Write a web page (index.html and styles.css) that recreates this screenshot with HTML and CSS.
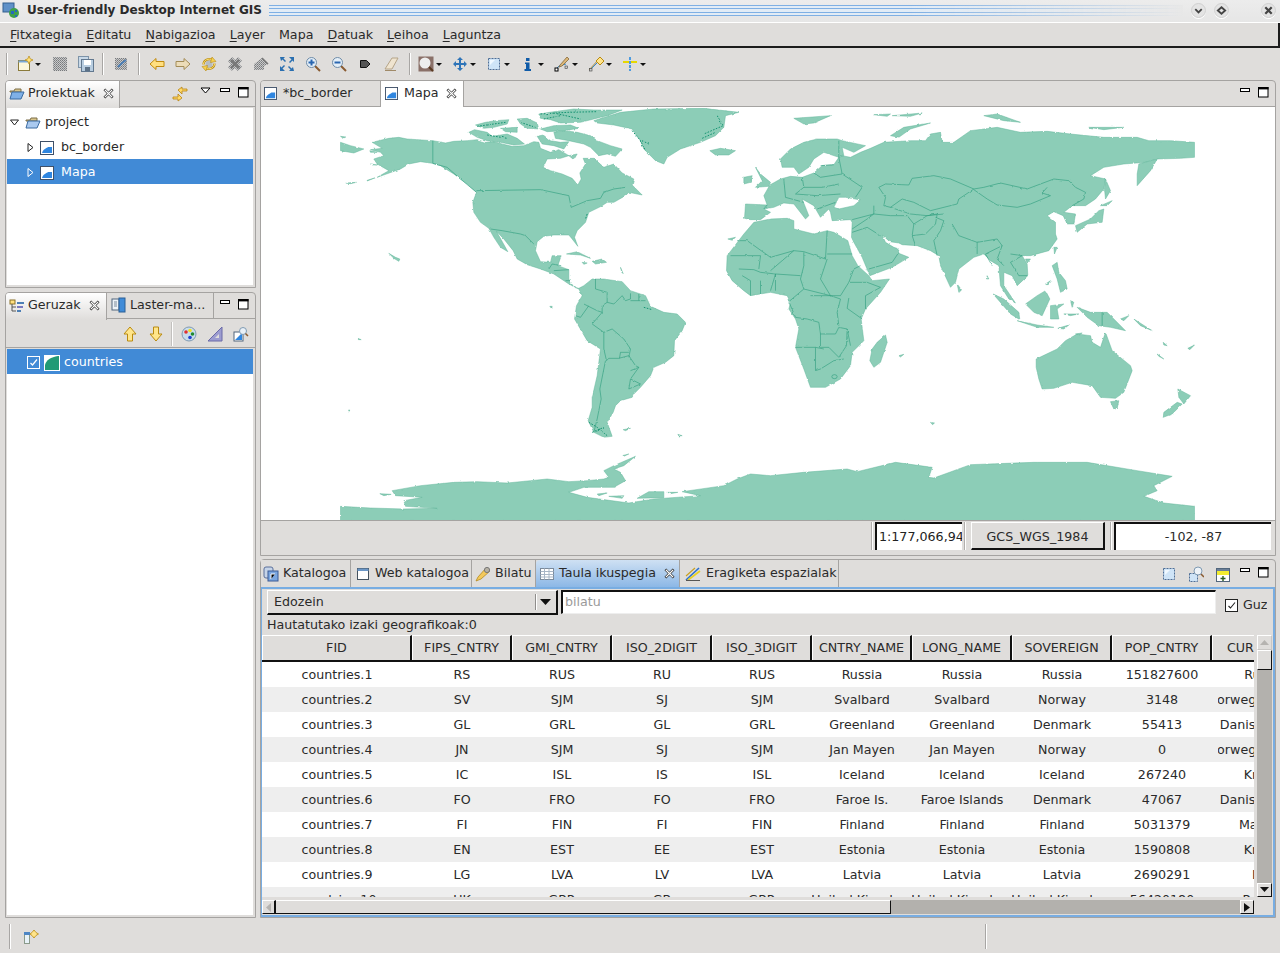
FILE: index.html
```html
<!DOCTYPE html>
<html lang="eu">
<head>
<meta charset="utf-8">
<title>User-friendly Desktop Internet GIS</title>
<link rel="stylesheet" href="styles.css">
</head>
<body>
<svg class="defs" aria-hidden="true">
  <defs>
    <pattern id="dith" width="2" height="2" patternUnits="userSpaceOnUse">
      <rect width="2" height="2" fill="#c9c9c9"/><rect width="1" height="1" fill="#77797c"/><rect x="1" y="1" width="1" height="1" fill="#8b8d90"/>
    </pattern>
    <filter id="rough" x="0" y="0" width="100%" height="100%">
      <feTurbulence type="fractalNoise" baseFrequency=".22" numOctaves="2" seed="4"/>
      <feDisplacementMap in="SourceGraphic" scale="2.200" xChannelSelector="R" yChannelSelector="G"/>
    </filter>
    <symbol id="i-map" viewBox="0 0 14 14"><rect x=".5" y=".5" width="13" height="13" fill="#fff" stroke="#3f5068"/><path d="M2 12 C3 8 7 7 8 6 H12 V12Z" fill="#2f86e0"/></symbol>
    <symbol id="i-close" viewBox="0 0 12 12"><path d="M2.500 2.500L9.500 9.500M9.500 2.500L2.500 9.500" stroke="#333" stroke-width="2.800" stroke-linecap="square"/><path d="M2.500 2.500L9.500 9.500M9.500 2.500L2.500 9.500" stroke="#fff" stroke-width="1.300" stroke-linecap="square"/></symbol>
    <symbol id="i-min" viewBox="0 0 11 5"><rect x=".5" y=".5" width="9" height="3" fill="#fff" stroke="#000"/></symbol>
    <symbol id="i-max" viewBox="0 0 11 11"><rect x=".5" y=".5" width="9.5" height="9.5" fill="#fff" stroke="#000"/><rect x="0" y="0" width="10.5" height="2.4" fill="#000"/></symbol>
    <symbol id="i-sel" viewBox="0 0 16 16"><rect x="2.500" y="2.500" width="11" height="11" fill="#cfe4f7" stroke="#4e6f96" stroke-dasharray="2 1"/><path d="M4 4H9L4 9Z" fill="#f0f8ff"/></symbol>
    <symbol id="i-mag" viewBox="0 0 16 16"><path d="M10 10L15 15" stroke="#8a5a30" stroke-width="2"/><circle cx="6.500" cy="6.500" r="5" fill="#e4eef7" stroke="#6f8ca8"/></symbol>
  </defs>
</svg>

<header class="titlebar">
  <svg class="ic app" viewBox="0 0 18 18"><rect x="1" y="2" width="11" height="9" fill="#5f91c8" stroke="#34618f"/><circle cx="12" cy="12" r="5" fill="#3fa04c"/><path d="M9 10h3v3H9zM13 9h2v2h-2zM13 14h2v2h-2z" fill="#2568c0"/></svg>
  <span class="wintitle">User-friendly Desktop Internet GIS</span>
  <span class="stripes"></span>
  <span class="wbtn"><svg viewBox="0 0 12 12"><path d="M2.500 4.500L6 8L9.500 4.500" fill="none" stroke="#444" stroke-width="2"/></svg></span>
  <span class="wbtn wbtn2"><svg viewBox="0 0 12 12"><path d="M6 2.500L10 6L6 9.500L2 6Z" fill="none" stroke="#444" stroke-width="2"/></svg></span>
  <span class="wbtn wbtn3"><svg viewBox="0 0 12 12"><path d="M2.500 2.500L9.500 9.500M9.500 2.500L2.500 9.500" stroke="#444" stroke-width="2.400"/></svg></span>
</header>

<nav class="menubar">
  <span><u>F</u>itxategia</span><span><u>E</u>ditatu</span><span><u>N</u>abigazioa</span><span><u>L</u>ayer</span><span>Mapa</span><span><u>D</u>atuak</span><span><u>L</u>eihoa</span><span><u>L</u>aguntza</span>
</nav>

<div class="toolbar">
  <i class="sep first"></i>
  <span class="dd dd-first"><svg class="ic" viewBox="0 0 16 16"><rect x="1.500" y="4.500" width="11" height="10" fill="#fdf8dc" stroke="#8a7a3a"/><rect x="1.500" y="4.500" width="11" height="2" fill="#7ba9d8"/><path d="M12 0L13.200 2.800L16 4L13.200 5.200L12 8L10.800 5.200L8 4L10.800 2.800Z" fill="#ffe27a" stroke="#b98a10" stroke-width=".7"/></svg><b class="arrow"></b></span>
  <span class="tb"><svg class="ic" viewBox="0 0 16 16"><rect x="1" y="1" width="14" height="14" fill="url(#dith)"/></svg></span>
  <span class="tb"><svg class="ic" viewBox="0 0 16 16"><rect x=".5" y=".5" width="10" height="11" fill="#c9d9e8" stroke="#7d93a8"/><rect x="3.500" y="3.500" width="12" height="12" fill="#b8cde0" stroke="#62788f"/><rect x="6" y="4" width="7" height="5" fill="#fff"/><rect x="7" y="11" width="5" height="4" fill="#5d7288"/></svg></span>
  <i class="sep s2"></i>
  <span class="tb"><svg class="ic" viewBox="0 0 16 16"><rect x="2" y="2" width="12" height="12" fill="url(#dith)"/><path d="M5 11L9 7L13 4" stroke="#4d7fb5" stroke-width="2" fill="none"/></svg></span>
  <i class="sep s3"></i>
  <span class="tb"><svg class="ic" viewBox="0 0 16 16"><path d="M1 8L7 2.500V5.500H15V10.500H7V13.500Z" fill="#ffdf80" stroke="#c08a10"/></svg></span>
  <span class="tb"><svg class="ic" viewBox="0 0 16 16"><path d="M15 8L9 2.500V5.500H1V10.500H9V13.500Z" fill="#ecdcb8" stroke="#a38c58"/></svg></span>
  <span class="tb"><svg class="ic" viewBox="0 0 16 16"><circle cx="8" cy="8" r="3.500" fill="#b7bdc2"/><path d="M2.500 8.500C2.500 4 7.500 1.800 11.800 4M13.500 7.500C13.500 12 8.500 14.200 4.200 12" fill="none" stroke="#b98a10" stroke-width="2.200"/><path d="M2.500 8.500C2.500 4 7.500 1.800 11.800 4M13.500 7.500C13.500 12 8.500 14.200 4.200 12" fill="none" stroke="#ffe67a" stroke-width="1"/><path d="M11 1L15 5.500L9.500 6.500ZM5 15L1 10.500L6.500 9.500Z" fill="#f5d050" stroke="#b98a10" stroke-width=".6"/></svg></span>
  <span class="tb"><svg class="ic" viewBox="0 0 16 16"><path d="M3 3L13 13M13 3L3 13" stroke="url(#dith)" stroke-width="6"/><path d="M4 4L12 12M12 4L4 12" stroke="#777" stroke-width="2.400"/></svg></span>
  <span class="tb"><svg class="ic" viewBox="0 0 16 16"><path d="M1 14V8L9 2L15 8L11 10V14Z" fill="url(#dith)"/><path d="M9 2L15 8" stroke="#777" stroke-width="1.500"/></svg></span>
  <span class="tb"><svg class="ic" viewBox="0 0 16 16"><path d="M1 1H6L4.500 2.500L7 5L6 6L3.500 3.500L2 5ZM15 1V6L13.500 4.500L11 7L10 6L12.500 3.500L10 1ZM1 15V10L2.500 11.500L5 9L6 10L3.500 12.500L6 15ZM15 15H10L11.500 13.500L9 11L10 10L12.500 12.500L14 11Z" fill="#2a6fb0"/></svg></span>
  <span class="tb"><svg class="ic" viewBox="0 0 16 16"><use href="#i-mag"/><path d="M3.500 6.500H9.500M6.500 3.500V9.500" stroke="#2a66b0" stroke-width="2"/></svg></span>
  <span class="tb"><svg class="ic" viewBox="0 0 16 16"><use href="#i-mag"/><path d="M3.500 6.500H9.500" stroke="#2a66b0" stroke-width="2"/></svg></span>
  <span class="tb"><svg class="ic" viewBox="0 0 16 16"><path d="M3.500 4.500H9.500L13 8L9.500 11.500H3.500Z" fill="#555" stroke="#111"/></svg></span>
  <span class="tb"><svg class="ic" viewBox="0 0 16 16"><path d="M2 13L9 2H15L9 13Z" fill="#efe4d0" stroke="#b5a488"/><path d="M2 14.500H13" stroke="#a08a68"/></svg></span>
  <i class="sep s4"></i>
  <span class="dd"><svg class="ic" viewBox="0 0 16 16"><rect x=".5" y=".5" width="15" height="15" fill="#8a7068"/><circle cx="7" cy="7" r="5.500" fill="#eee"/><path d="M11 11L15 15" stroke="#5a3a20" stroke-width="2"/></svg><b class="arrow"></b></span>
  <span class="dd"><svg class="ic" viewBox="0 0 16 16"><path d="M8 1L11 4H9V7H12V5L15 8L12 11V9H9V12H11L8 15L5 12H7V9H4V11L1 8L4 5V7H7V4H5Z" fill="#2e74b8"/></svg><b class="arrow"></b></span>
  <span class="dd"><svg class="ic" viewBox="0 0 16 16"><use href="#i-sel"/></svg><b class="arrow"></b></span>
  <span class="dd"><svg class="ic" viewBox="0 0 16 16"><path d="M6 2H9.500V5H6ZM5 6.500H9.500V13H11V15H4.500V13H6V8H5Z" fill="#0f5ba8"/></svg><b class="arrow"></b></span>
  <span class="dd"><svg class="ic" viewBox="0 0 16 16"><path d="M2 13L5 10L12 8" stroke="#3a8ac8" fill="none"/><rect x="1" y="12" width="3" height="3" fill="#fff" stroke="#000"/><rect x="11" y="10" width="2.500" height="2.500" fill="#ccc" stroke="#444" stroke-width=".6"/><path d="M6 9L13 1L15 3L8 10L5 11Z" fill="#dcb878" stroke="#7a5a2c" stroke-width=".7"/></svg><b class="arrow"></b></span>
  <span class="dd"><svg class="ic" viewBox="0 0 16 16"><path d="M1 14L12 2" stroke="#a88a3a"/><path d="M3 13L9 7" stroke="#3a8ac8"/><rect x="1.500" y="12.500" width="2.500" height="2.500" fill="#ccc" stroke="#444" stroke-width=".6"/><path d="M12 1L16 5L12 9L8 5Z" fill="#ffe48a" stroke="#b98a10"/></svg><b class="arrow"></b></span>
  <span class="dd"><svg class="ic" viewBox="0 0 16 16"><path d="M1 6H15" stroke="#e6d800" stroke-width="2"/><path d="M8 1V15" stroke="#4d9be0" stroke-width="2" stroke-dasharray="3 1"/></svg><b class="arrow"></b></span>
</div>

<main class="workbench">
  <section class="leftcol">
    <div class="panel proj">
      <div class="tabstrip">
        <div class="tab on"><svg class="ic" viewBox="0 0 16 16"><path d="M1 5H5L6 3H12V6H1Z" fill="#d9c58a" stroke="#7d6f48"/><path d="M3 6H15L12 13H1Z" fill="#7fb0e6" stroke="#3a6aa0"/></svg>Proiektuak<svg class="x" viewBox="0 0 12 12"><use href="#i-close"/></svg></div>
        <span class="fill"></span>
        <svg class="ic link" viewBox="0 0 16 16"><path d="M1 11H6V8L10 12L6 15V13H1ZM15 5H10V8L6 4L10 1V3H15Z" fill="#ffd968" stroke="#b98410" stroke-width=".8"/></svg>
        <svg class="vmenu" viewBox="0 0 11 7"><path d="M1 1H10L5.500 6Z" fill="#fff" stroke="#000"/></svg>
        <svg class="min" viewBox="0 0 11 5"><use href="#i-min"/></svg>
        <svg class="max" viewBox="0 0 11 11"><use href="#i-max"/></svg>
      </div>
      <div class="tree">
        <div class="node"><svg class="tw" viewBox="0 0 9 9"><path d="M.5 2H8.500L4.500 7Z" fill="#fff" stroke="#222"/></svg><svg class="ic" viewBox="0 0 16 16"><path d="M1 5H5L6 3H12V6H1Z" fill="#d9c58a" stroke="#7d6f48"/><path d="M3 6H15L12 13H1Z" fill="#a9c9ef" stroke="#3a6aa0"/></svg><span>project</span></div>
        <div class="node l2"><svg class="tw" viewBox="0 0 9 9"><path d="M2 .5L7 4.500L2 8.500Z" fill="#fff" stroke="#222"/></svg><svg class="ic" viewBox="0 0 14 14"><use href="#i-map"/></svg><span>bc_border</span></div>
        <div class="node l2 sel"><svg class="tw" viewBox="0 0 9 9"><path d="M2 .5L7 4.500L2 8.500Z" fill="#3f87d3" stroke="#fff"/></svg><svg class="ic" viewBox="0 0 14 14"><use href="#i-map"/></svg><span>Mapa</span></div>
      </div>
    </div>
    <div class="panel layers">
      <div class="tabstrip">
        <div class="tab on geru"><svg class="ic" viewBox="0 0 16 16"><rect x="1" y="2" width="5" height="4" fill="#ffe080" stroke="#8a7028"/><path d="M3 6V13H7M3 9H7" stroke="#555" fill="none"/><rect x="8" y="4" width="7" height="2" fill="#4d7fb5"/><rect x="8" y="8" width="6" height="2" fill="#7a7ac0"/><rect x="8" y="12" width="4" height="2" fill="#4d7fb5"/></svg>Geruzak<svg class="x" viewBox="0 0 12 12"><use href="#i-close"/></svg></div>
        <div class="tab off laster"><svg class="ic" viewBox="0 0 16 16"><rect x="1" y="2" width="7" height="11" fill="#eef3f8" stroke="#52667c"/><rect x="8" y="1" width="6" height="14" fill="#3f8bd8" stroke="#2a5f95"/><path d="M3 5H6M3 7H6M3 9H6" stroke="#7a8a9a"/></svg>Laster-ma...</div>
        <span class="fill"></span>
        <svg class="min" viewBox="0 0 11 5"><use href="#i-min"/></svg>
        <svg class="max" viewBox="0 0 11 11"><use href="#i-max"/></svg>
      </div>
      <div class="layerbar">
        <svg class="ic" viewBox="0 0 16 16"><path d="M8 1L14 8H10.500V15H5.500V8H2Z" fill="#ffe58a" stroke="#b98a10"/></svg>
        <svg class="ic g2" viewBox="0 0 16 16"><path d="M8 15L14 8H10.500V1H5.500V8H2Z" fill="#ffe58a" stroke="#b98a10"/></svg>
        <i class="vbar"></i>
        <svg class="ic" viewBox="0 0 16 16"><circle cx="8" cy="8" r="7" fill="#c8dcec" stroke="#7f9ab2"/><circle cx="5" cy="6" r="1.800" fill="#e03030"/><circle cx="9" cy="4.500" r="1.800" fill="#f2e020"/><circle cx="11.500" cy="8" r="1.800" fill="#208a30"/><circle cx="9" cy="11.500" r="1.800" fill="#2040d0"/></svg>
        <svg class="ic g3" viewBox="0 0 16 16"><path d="M1 15L15 1V15Z" fill="#9c9cd0" stroke="#6a6aa8"/><path d="M8 12L12 8V12Z" fill="#dfdddb"/></svg>
        <svg class="ic g3" viewBox="0 0 16 16"><rect x="1" y="6" width="9" height="9" fill="#fff" stroke="#52667c"/><path d="M2 14L9 7V14Z" fill="#2f86e0"/><circle cx="10" cy="5" r="3.500" fill="#e9f0f7" stroke="#7f9ab2"/><path d="M12.500 7.500L15 10" stroke="#8a5a30" stroke-width="1.500"/></svg>
      </div>
      <div class="tree layertree">
        <div class="node laynode sel"><span class="chk"><svg viewBox="0 0 11 11"><path d="M2.500 6L4.500 8L9 2.500" fill="none" stroke="#fff" stroke-width="1.200"/></svg></span><svg class="swatch" viewBox="0 0 16 16"><rect width="16" height="16" fill="#fff"/><path d="M1 15V10C2 5 7 2 14 1H15V15Z" fill="#219a75"/></svg><span>countries</span></div>
      </div>
    </div>
  </section>

  <section class="rightcol">
    <div class="panel editor">
      <div class="tabstrip">
        <div class="tab off bc"><svg class="ic ed" viewBox="0 0 14 14"><use href="#i-map"/></svg>*bc_border</div>
        <div class="tab white mapa"><svg class="ic ed" viewBox="0 0 14 14"><use href="#i-map"/></svg>Mapa<svg class="x" viewBox="0 0 12 12"><use href="#i-close"/></svg></div>
        <span class="fill"></span>
        <svg class="min" viewBox="0 0 11 5"><use href="#i-min"/></svg>
        <svg class="max" viewBox="0 0 11 11"><use href="#i-max"/></svg>
      </div>
      <svg class="map" viewBox="261 108 1013 413" width="1013" height="413" role="img" aria-label="Munduko mapa">
        <g filter="url(#rough)">
        <g class="land">
          <g transform="translate(320 100) scale(.33333)">
            <path d="M155 130L175 125 205 118 235 115 260 120 337 125 375 132 400 127 440 125 470 122 495 130 520 128 545 135 575 142 610 140 640 128 655 130 660 148 690 160 715 152 745 170 720 178 680 180 668 205 690 215 725 225 755 238 772 258 782 240 778 222 795 195 788 178 820 178 850 205 880 195 905 222 940 240 935 258 965 288 925 280 915 290 880 310 860 310 842 322 805 340 795 370 770 395 762 415 772 442 755 420 745 408 700 408 670 412 650 428 645 455 660 488 690 490 695 470 722 470 712 500 745 512 745 540 760 565 775 568 790 560 815 540 850 540 905 548 930 575 975 590 990 622 1030 640 1070 645 1095 670 1085 695 1062 725 1060 770 1035 790 1000 805 990 830 960 865 940 885 935 895 900 905 885 920 878 940 860 970 875 1012 850 1015 820 1000 803 965 815 925 815 895 830 830 840 750 800 725 762 660 768 620 785 590 775 570 745 555 700 525 660 510 620 497 590 480 578 455 550 420 528 397 562 458 540 445 520 415 505 388 480 370 460 340 457 310 468 280 440 255 400 225 360 200 335 193 300 188 265 195 240 210 170 235 205 215 170 195 160 180 190 170 180 160 150 152 185 148Z"/>
            <path d="M445 100L462 92 500 100 515 112 560 105 590 118 612 135 580 138 540 130 500 125 470 115Z"/>
            <path d="M700 100L730 95 770 100 810 110 830 125 870 140 905 150 885 172 860 165 835 170 810 145 790 135 745 125 705 118Z"/>
            <path d="M650 112L668 108 690 125 720 130 745 128 730 150 700 140 665 135Z"/>
            <path d="M745 170L770 165 760 182Z"/>
            <path d="M655 45L700 38 760 30 820 33 905 33 860 50 820 60 780 70 720 72 690 62 660 58Z"/>
            <path d="M465 78L495 70 525 65 565 62 560 75 520 85 490 88Z"/>
            <path d="M590 60L620 58 650 72 655 90 620 88 600 75Z"/>
            <path d="M660 90L700 80 750 78 775 88 730 95 680 98Z"/>
            <path d="M540 88L590 85 590 100 555 98Z"/>
            <path d="M820 65L900 40 1000 30 1150 28 1255 40 1215 50 1210 85 1185 110 1140 130 1080 150 1040 175 1030 195 1005 185 970 150 960 125 935 90 880 78 830 72Z"/>
            <path d="M1168 155L1200 148 1245 155 1225 168 1185 168Z"/>
            <path d="M60 130L90 140 130 150 100 162 60 155Z"/>
            <path d="M738 465L770 458 810 478 780 468Z"/>
            <path d="M815 487L845 480 858 490 825 495Z"/>
            <path d="M785 490L800 492 790 496Z"/>
            <path d="M60 112L76 114 68 118Z"/>
            <path d="M205 463L225 475 238 480 235 487 220 478Z"/>
            <path d="M1270 235L1295 230 1290 250 1270 255Z"/>
            <path d="M1305 205L1320 225 1350 250 1345 262 1305 265 1325 245Z"/>
            <path d="M140 244L165 236 140 246ZM76 252L108 250 90 254Z"/>
            <path d="M688 622L695 622 694 630Z"/>
            <path d="M900 505L908 524 904 520Z"/>
            <path d="M1222 420L1245 415 1235 424Z"/>
            <path d="M112 718L122 722 114 722Z"/>
            <path d="M148 155L170 160 150 160ZM150 195L170 198 155 198Z"/>
          </g>
          <g transform="translate(770 100) scale(.33333)">
            <path d="M-75 315L-10 318 -20 290 -2 258 30 240 60 232 95 235 130 222 155 200 190 197 205 175 215 170 240 175 270 160 300 148 340 130 420 125 465 125 480 105 510 100 515 130 550 130 600 95 680 85 750 100 830 97 900 105 1000 115 1100 115 1135 125 1200 125 1272 130 1272 175 1230 178 1160 180 1125 190 1060 195 1000 205 960 230 1005 240 1000 270 975 300 945 320 905 320 880 340 915 345 910 375 890 375 878 350 850 338 830 350 855 370 855 405 860 420 835 455 780 470 755 470 770 495 772 530 740 560 725 530 700 520 700 560 735 612 715 600 690 560 685 500 660 485 640 465 610 475 565 510 555 550 540 565 510 500 505 470 480 455 440 440 395 437 385 432 358 428 335 408 345 430 370 445 385 450 383 462 415 475 365 505 298 530 275 475 250 430 243 415 245 370 240 362 185 365 180 340 175 330 150 355 130 320 95 300 115 350 105 360 70 315 40 312 10 325 -20 330 0 340 -30 362 -60 362 -78 358Z"/>
            <path d="M30 180L60 150 100 130 140 120 200 120 215 125 285 140 250 160 215 145 220 170 205 175 160 160 130 180 115 205 85 225 70 205 35 205Z"/>
            <path class="sea" d="M190 325L205 295 225 295 270 303 250 320 205 330Z"/>
            <path d="M-50 370L-80 405 -130 470 -132 515 -115 545 -80 575 -60 590 0 580 50 590 60 610 55 630 75 660 85 690 75 745 100 810 120 865 165 865 210 840 240 800 245 760 280 725 272 660 285 630 330 580 357 540 305 545 295 530 262 500 245 470 232 425 190 400 170 395 130 405 70 390 70 365 50 358 0 360Z"/>
            <path d="M345 708L350 730 330 790 310 805 298 785 305 750 320 730Z"/>
            <path d="M560 555L575 575 565 580Z"/>
            <path d="M360 110L400 85 480 72 420 90 385 115Z"/>
            <path d="M70 58L180 50 130 72 100 75Z"/>
            <path d="M310 47L360 45 350 52ZM365 50L455 42 420 52ZM640 50L680 45 750 70 700 65Z"/>
            <path d="M955 85L1060 85 1000 92Z"/>
            <path d="M1100 225L1105 195 1160 180 1140 215 1100 260Z"/>
            <path d="M1005 240L1020 275 1005 300 1002 270Z"/>
            <path d="M915 380L960 360 985 335 1000 330 995 370 950 375 920 400Z"/>
            <path d="M990 320L1025 305 1010 320Z"/>
            <path d="M850 445L860 445 852 465Z"/>
            <path d="M765 480L780 480 770 492Z"/>
            <path d="M845 500L860 490 865 520 885 545 890 570 870 580 860 540Z"/>
            <path d="M765 615L800 590 825 575 838 600 815 650 790 640Z"/>
            <path d="M668 585L700 600 745 640 748 662 720 645Z"/>
            <path d="M740 665L800 678 850 685 800 685Z"/>
            <path d="M862 688L895 678 880 690Z"/>
            <path d="M840 620L880 615 860 630 865 660 840 660Z"/>
            <path d="M900 605L910 610 905 625ZM880 645L925 645 900 650Z"/>
            <path d="M920 625L960 640 1010 640 1040 670 1065 695 1020 685 985 680 950 655Z"/>
            <path d="M1050 660L1075 650 1060 665ZM1090 660L1145 695 1110 680Z"/>
            <path d="M797 780L860 750 885 725 920 705 960 710 965 730 990 745 1005 700 1025 755 1080 800 1085 815 1060 880 1035 898 990 895 965 860 905 850 850 868 815 870 805 840 797 805Z"/>
            <path d="M1020 908L1045 905 1040 928 1030 930Z"/>
            <path d="M1222 870L1260 890 1240 915 1225 895Z"/>
            <path d="M1220 910L1235 915 1205 945 1178 955 1180 940Z"/>
            <path d="M1160 765L1180 780 1165 772ZM1252 748L1272 738 1258 752Z"/>
            <path d="M1178 730L1190 740 1180 738ZM650 530L655 540 648 540ZM825 555L840 545 830 558ZM915 705L935 702 925 708Z"/>
          </g>
          <g transform="translate(320 300) scale(.33333)">
            <path d="M60 622L150 627 250 630 350 628 255 622 250 605 305 595 225 590 215 575 300 560 400 550 470 548 560 552 630 545 680 540 745 548 800 545 850 540 865 535 850 515 880 500 945 472 910 500 880 510 900 520 915 545 880 565 790 565 745 580 800 595 925 612 1000 600 1140 590 1085 578 1210 560 1250 540 1290 525 1350 530 1450 520 1580 510 1610 518 1725 490 1835 505 1825 535 1840 537 1950 497 2140 490 2300 490 2450 515 2555 532 2500 560 2510 575 2470 592 2530 612 2622 622 2622 665 60 665Z"/>
            <path d="M950 598L985 578 1030 578 1030 596Z"/>
            <path d="M865 592L910 590 905 598ZM830 585L860 582 835 590ZM1042 580L1072 580 1050 584Z"/>
            <path d="M178 584L212 586 190 590Z"/>
            <path d="M908 392L930 388 915 395ZM1072 406L1085 410 1075 411Z"/>
            <path d="M84 333L88 333 86 337Z"/>
            <path d="M905 470L925 465 910 472Z"/>
          </g>
          <g transform="translate(770 300) scale(.33333)">
            <path d="M480 370L492 372 486 377Z"/>
            <path d="M385 170L400 166 390 174Z"/>
          </g>
        </g>
        <g class="borders">
          <g transform="translate(320 100) scale(.33333)">
            <path d="M337 125V193L380 205 420 240 468 280"/>
            <path d="M468 275L660 272 745 290 752 325 800 305 840 298 850 280 880 270 915 265"/>
            <path d="M510 390L545 395 600 405 615 410 640 435M685 510L695 495 722 500M700 515L745 512M735 545L750 545"/>
            <path d="M825 540V570L860 580V610L880 615 905 590 915 605 930 600V583M930 605H975M955 585V605"/>
            <path d="M790 615L830 635 845 640V620L860 610M765 650L780 655 805 620"/>
            <path d="M845 640L815 675 850 700V750M850 700L875 690 910 720 930 750 925 775"/>
            <path d="M850 750L858 785 865 778H895L925 770 945 800 955 805 930 815M855 785L838 870 842 900 830 960 820 1000"/>
            <path d="M897 778L900 760H925M955 805L930 840 925 870 960 855 930 840"/>
          </g>
          <g class="detail" transform="translate(320 100) scale(.33333)">
            <path d="M660 45L740 40 830 38M670 60L720 50M700 42L780 60M935 95L960 125 975 155M965 125L985 135M1190 50L1208 80 1150 105M1145 118L1185 100M470 82L555 70M600 70L645 85M500 108L560 118M805 970L830 985 860 1010M815 1000L850 985M970 625L995 632M800 345L795 360"/>
          </g>
          <g transform="translate(770 100) scale(.33333)">
            <path d="M-100 425H-70L0 475 70 455 100 458 165 480 170 395M170 465H245M170 480L150 540 180 590"/>
            <path d="M100 570L180 590H210L235 550 250 510 270 500M235 550H290L330 565 285 590V630M100 460V500L90 540 100 570"/>
            <path d="M-120 470H-30L-35 510M-95 510L-50 512 -30 520 15 525 0 575M0 515L70 455M15 525L90 530M55 608L100 570M-60 590V545L-85 530M-30 585V545M15 575V525"/>
            <path d="M55 608L75 655 110 660 145 670 150 705H195L205 685 230 690M120 590H180L210 600 200 640 205 680M235 597L230 628 275 660"/>
            <path d="M75 745H135L160 750M135 745V815L150 810 190 785 220 780M150 705V745H175L205 775 228 740 230 690 240 740"/>
            <ellipse cx="192" cy="833" rx="8" ry="6" fill="none"/>
            <path d="M325 265L345 255 415 258 425 238 490 230 540 240 610 270 640 265 690 252 770 270 850 240 895 245 915 265 945 280 940 300 905 320"/>
            <path d="M610 272L650 300 680 318 740 325 780 315 840 290 815 282 830 265"/>
            <path d="M325 265L345 295 340 320 360 325 395 300 430 310 480 335 560 315 565 300 610 270"/>
            <path d="M360 325L420 345 470 350 520 345M310 345L360 350 410 350 430 375 425 410 435 440M430 375L470 350 500 345 495 375 465 405 425 410"/>
            <path d="M495 355L520 365 510 395 490 425 500 470M545 375L565 410 620 430 620 465M620 430L680 420 695 440 645 465 665 500M695 440L680 480 700 500M720 465L755 470 720 490 745 530 770 530"/>
            <path d="M245 390L290 360 310 345M245 400L290 385 330 410M295 510L365 490 385 460M310 320V345L245 362"/>
            <path d="M205 125V175L215 225 275 265 255 295M40 240L45 295 100 310M95 235L100 265H155L205 255M100 265L75 285 140 290 210 285M130 222L150 235 215 225M140 330L195 310M150 200L190 197M-20 330L-10 318"/>
            <path d="M995 640V680"/>
          </g>
        </g>
        </g>
      </svg>
      <div class="mapstatus">
        <span class="fill"></span>
        <i class="vgroove"></i>
        <span class="scale">1:177,066,94</span>
        <i class="vgroove"></i>
        <span class="crs">GCS_WGS_1984</span>
        <i class="vgroove"></i>
        <span class="coords">-102, -87</span>
      </div>
    </div>

    <div class="panel bottom">
      <div class="tabstrip low">
        <div class="tab off kat"><svg class="ic" viewBox="0 0 16 16"><rect x="1" y="1" width="9" height="11" rx="2" fill="#c6d4e8" stroke="#5a6f9a"/><rect x="5" y="5" width="10" height="10" fill="#7ba6df" stroke="#3a5a96"/><path d="M8 13V8H12" stroke="#fff"/></svg>Katalogoa</div>
        <div class="tab off web"><svg class="ic" viewBox="0 0 16 16"><rect x="2.500" y="2.500" width="11" height="11" fill="#fff" stroke="#44525f"/><rect x="2.500" y="2.500" width="11" height="2.500" fill="#6b96c6"/></svg>Web katalogoa</div>
        <div class="tab off bil"><svg class="ic" viewBox="0 0 16 16"><path d="M1 15L3 11L11 2L15 5L6 13Z" fill="#f4c95a" stroke="#b58a20" stroke-width=".8"/><circle cx="12" cy="4" r="2.600" fill="#b8b2a4" stroke="#777"/></svg>Bilatu</div>
        <div class="tab act"><svg class="ic" viewBox="0 0 16 16"><rect x="1.500" y="2.500" width="13" height="11" fill="#fff" stroke="#7a8a9c"/><path d="M1.500 5.500H14.500M1.500 8.500H14.500M1.500 11H14.500M5.500 2.500V13.500M10 2.500V13.500" stroke="#a8b6c6"/></svg>Taula ikuspegia<svg class="x" viewBox="0 0 12 12"><use href="#i-close"/></svg></div>
        <div class="tab off esp"><svg class="ic" viewBox="0 0 16 16"><path d="M1 14L14 2" stroke="#2a6fd0" stroke-width="1.600"/><path d="M3 14L15 5" stroke="#e8d020" stroke-width="1.600"/><path d="M1 10L10 2" stroke="#c8a020" stroke-width="1.200"/><path d="M1 14.500H15" stroke="#555"/></svg>Eragiketa espazialak</div>
        <span class="fill"></span>
        <svg class="ic act1" viewBox="0 0 16 16"><use href="#i-sel"/></svg>
        <svg class="ic act2" viewBox="0 0 16 16"><rect x="1.500" y="7.500" width="8" height="8" fill="#cfe4f7" stroke="#4e6f96" stroke-dasharray="2 1"/><circle cx="10" cy="5" r="4" fill="#eef3f8" stroke="#7f9ab2"/><path d="M13 8L16 11" stroke="#8a5a30" stroke-width="1.500"/></svg>
        <svg class="ic act3" viewBox="0 0 16 16"><rect x="1.500" y="1.500" width="13" height="13" fill="#fff" stroke="#52667c"/><rect x="2" y="2" width="12" height="2" fill="#6b7f98"/><rect x="2" y="4" width="12" height="4" fill="#f2ec30"/><path d="M8 9V14M5.500 11.500H10.500" stroke="#2a5a20" stroke-width="1.400"/></svg>
        <svg class="min" viewBox="0 0 11 5"><use href="#i-min"/></svg>
        <svg class="max" viewBox="0 0 11 11"><use href="#i-max"/></svg>
      </div>
      <div class="tablewrap">
        <div class="filter">
          <div class="combo"><span>Edozein</span><i class="cdiv"></i><svg class="carrow" viewBox="0 0 11 6"><path d="M0 0H11L5.500 6Z" fill="#111"/></svg></div>
          <div class="search">bilatu</div>
          <span class="box"><svg viewBox="0 0 11 11"><path d="M2.500 6L4.500 8L9 2.500" fill="none" stroke="#222" stroke-width="1.100"/></svg></span>
          <span class="guz">Guz</span>
        </div>
        <div class="sellabel">Hautatutako izaki geografikoak:0</div>
        <div class="tablearea">
          <div class="grid">
            <div class="hrow"><span>FID</span><span>FIPS_CNTRY</span><span>GMI_CNTRY</span><span>ISO_2DIGIT</span><span>ISO_3DIGIT</span><span>CNTRY_NAME</span><span>LONG_NAME</span><span>SOVEREIGN</span><span>POP_CNTRY</span><span class="last">CURR_TYPE</span></div>
            <div class="row"><span>countries.1</span><span>RS</span><span>RUS</span><span>RU</span><span>RUS</span><span>Russia</span><span>Russia</span><span>Russia</span><span>151827600</span><span class="last"><b>Ruble</b></span></div>
            <div class="row"><span>countries.2</span><span>SV</span><span>SJM</span><span>SJ</span><span>SJM</span><span>Svalbard</span><span>Svalbard</span><span>Norway</span><span>3148</span><span class="last"><b>Norwegian Krone</b></span></div>
            <div class="row"><span>countries.3</span><span>GL</span><span>GRL</span><span>GL</span><span>GRL</span><span>Greenland</span><span>Greenland</span><span>Denmark</span><span>55413</span><span class="last"><b>Danish Krone</b></span></div>
            <div class="row"><span>countries.4</span><span>JN</span><span>SJM</span><span>SJ</span><span>SJM</span><span>Jan Mayen</span><span>Jan Mayen</span><span>Norway</span><span>0</span><span class="last"><b>Norwegian Krone</b></span></div>
            <div class="row"><span>countries.5</span><span>IC</span><span>ISL</span><span>IS</span><span>ISL</span><span>Iceland</span><span>Iceland</span><span>Iceland</span><span>267240</span><span class="last"><b>Krona</b></span></div>
            <div class="row"><span>countries.6</span><span>FO</span><span>FRO</span><span>FO</span><span>FRO</span><span>Faroe Is.</span><span>Faroe Islands</span><span>Denmark</span><span>47067</span><span class="last"><b>Danish Krone</b></span></div>
            <div class="row"><span>countries.7</span><span>FI</span><span>FIN</span><span>FI</span><span>FIN</span><span>Finland</span><span>Finland</span><span>Finland</span><span>5031379</span><span class="last"><b>Markka</b></span></div>
            <div class="row"><span>countries.8</span><span>EN</span><span>EST</span><span>EE</span><span>EST</span><span>Estonia</span><span>Estonia</span><span>Estonia</span><span>1590808</span><span class="last"><b>Kroon</b></span></div>
            <div class="row"><span>countries.9</span><span>LG</span><span>LVA</span><span>LV</span><span>LVA</span><span>Latvia</span><span>Latvia</span><span>Latvia</span><span>2690291</span><span class="last"><b>Lat</b></span></div>
            <div class="row"><span>countries.10</span><span>UK</span><span>GBR</span><span>GB</span><span>GBR</span><span>United Kingdom</span><span>United Kingdom</span><span>United Kingdom</span><span>56420180</span><span class="last"><b>Pound</b></span></div>
          </div>
          <div class="vscroll">
            <span class="sbtn up"><svg viewBox="0 0 9 6"><path d="M4.500 0L9 5H0Z" fill="#b5b3b0"/></svg></span>
            <span class="vthumb"></span>
            <span class="strough"></span>
            <span class="sbtn dn"><svg viewBox="0 0 9 6"><path d="M4.500 5L9 0H0Z" fill="#111"/></svg></span>
          </div>
        </div>
        <div class="hscroll">
          <span class="sbtn hb lft"><svg viewBox="0 0 6 9"><path d="M0 4.500L5 0V9Z" fill="#b5b3b0"/></svg></span>
          <span class="hthumb"></span>
          <span class="strough"></span>
          <span class="sbtn hb"><svg viewBox="0 0 6 9"><path d="M6 4.500L0 0V9Z" fill="#111"/></svg></span>
        </div>
      </div>
    </div>
  </section>
</main>

<footer class="statusbar">
  <i class="sbsep"></i>
  <svg class="ic sbicon" viewBox="0 0 16 16"><rect x="1.500" y="3.500" width="5" height="11" fill="#e8f2f8" stroke="#8a9a8a"/><rect x="1" y="3" width="6" height="3" fill="#4d86c4"/><path d="M11 1L13 3.500L15.500 5L13 6.500L11 9L9 6.500L7 5L9 3.500Z" fill="#ffe48a" stroke="#b98a10" stroke-width=".8"/></svg>
  <i class="sbsep second"></i>
</footer>
</body>
</html>
```

FILE: styles.css
```css
* { box-sizing: border-box; }
html, body { margin: 0; padding: 0; }
body {
  width: 1280px; height: 953px; overflow: hidden;
  display: flex; flex-direction: column;
  background: #dfdddb; color: #2a2a2a;
  font: 12.67px/1 "DejaVu Sans", sans-serif;
}
.defs { position: absolute; width: 0; height: 0; }
.ic { width: 16px; height: 16px; display: block; flex: none; }
.fill { flex: 1; }

/* window title */
.titlebar { height: 23px; flex: none; display: flex; align-items: center; background: linear-gradient(#ececec, #e6e6e6); border-bottom: 1px solid #fff; padding: 0 0 2px 2px; }
.app { width: 18px; height: 18px; margin-right: 7px; }
.wintitle { font-weight: bold; font-size: 12px; color: #2a2a2a; white-space: nowrap; }
.stripes { flex: 1; height: 11px; margin: 0 8px 0 7px; background: linear-gradient(to right, transparent 0, transparent 70%, #e8e8e8 100%), repeating-linear-gradient(#7fb0e4 0, #7fb0e4 1px, #e2ecf6 1px, #e2ecf6 3.500px); }
.wbtn { width: 15px; height: 15px; border-radius: 50%; background: #e4e4e4; border: 1px solid #cfcfcf; box-shadow: 0 1px 0 #fff; display: flex; padding: 1px; margin-right: 8px; flex: none; }
.wbtn svg { width: 100%; height: 100%; }
.wbtn2 { margin-right: 0; }
.wbtn3 { margin: 0 4px 0 32px; }

/* menu */
.menubar { height: 25px; flex: none; display: flex; align-items: center; gap: 14px; padding: 2px 0 0 10px; border-bottom: 2px solid #1c1c1c; border-right: 2px solid #1c1c1c; }
.menubar u { text-underline-offset: 2px; }

/* toolbar */
.toolbar { height: 32px; flex: none; display: flex; align-items: center; }
.sep { width: 2px; height: 22px; background: #fff; border-left: 1px solid #a8a6a4; flex: none; }
.sep.first { margin: 0 5px 0 6px; }
.s2 { margin: 0 4px 0 3px; }
.s3 { margin: 0 4px; }
.s4 { margin: 0 5px; }
.tb { width: 26px; height: 32px; display: flex; align-items: center; justify-content: center; flex: none; }
.dd { width: 34px; height: 32px; display: flex; align-items: center; padding-left: 2px; flex: none; }
.dd-first { width: 32px; margin-left: 2px; padding-left: 2px; }
.arrow { width: 0; height: 0; border-left: 3px solid transparent; border-right: 3px solid transparent; border-top: 3px solid #111; margin-left: 2px; }

/* workbench */
.workbench { height: 838px; flex: none; display: flex; gap: 4px; padding-left: 5px; margin-bottom: 2px; }
.leftcol { width: 251px; display: flex; flex-direction: column; gap: 4px; flex: none; }
.rightcol { width: 1016px; display: flex; flex-direction: column; gap: 3px; flex: none; }
.panel { border: 1px solid #a5a3a1; border-radius: 4px 4px 0 0; display: flex; flex-direction: column; min-height: 0; }
.proj { height: 208px; flex: none; }
.layers { flex: 1; }
.editor { height: 476px; flex: none; }
.bottom { flex: 1; }

.tabstrip { height: 26px; flex: none; display: flex; align-items: center; border-bottom: 1px solid #a5a3a1; }
.tabstrip.low { height: 27px; border-bottom: 0; }
.tab { height: 100%; display: flex; align-items: center; padding: 0 6px 1px 3px; white-space: nowrap; color: #2a2a2a; border-right: 1px solid #a5a3a1; flex: none; }
.tabstrip.low .tab { padding-bottom: 0; }
.tab .ic { margin-right: 3px; }
.tab.on { background: linear-gradient(#fff, #dfdddb); width: 114px; margin-bottom: -1px; height: 27px; border-radius: 3px 0 0 0; padding-right: 5px; }
.tab.geru { width: 101px; padding-right: 6px; }
.tab.laster { width: 107px; padding-left: 4px; }
.x { width: 11px; height: 11px; margin-left: auto; flex: none; }
.link { margin-right: 12px; }
.vmenu { width: 11px; height: 7px; margin: 0 9px 6px 0; flex: none; }
.min { width: 11px; height: 5px; margin: 0 7px 7px 0; flex: none; }
.max { width: 11px; height: 11px; margin: 0 6px 3px 0; flex: none; }

.tree { background: #fff; flex: 1; margin: 1px 2px 2px 1px; padding-top: 1px; }
.node { height: 25px; display: flex; align-items: center; padding: 2px 0 0 3px; }
.node .ic { width: 14px; height: 14px; margin-right: 7px; }
.proj .node:first-child .ic { width: 16px; height: 16px; margin-right: 4px; }
.tw { width: 9px; height: 9px; margin-right: 6px; flex: none; }
.l2 { padding-left: 19px; }
.l2 .tw { margin-right: 5px; margin-left: 0; }
.sel { background: #418ad6; color: #fff; }

.layerbar { height: 29px; flex: none; display: flex; align-items: center; justify-content: flex-end; padding: 1px 6px 0 0; border-bottom: 1px solid #a5a3a1; }
.g2 { margin-left: 10px; }
.vbar { width: 2px; height: 24px; background: #fff; border-left: 1px solid #c2c0be; margin: 0 8px 0 7px; }
.g3 { margin-left: 10px; }
.layertree { margin-top: 1px; padding-top: 0; }
.laynode { padding-left: 20px; }
.chk { width: 13px; height: 13px; border: 1px solid #fff; margin-right: 4px; display: block; flex: none; }
.chk svg, .box svg { display: block; width: 100%; height: 100%; }
.swatch { width: 16px; height: 16px; margin-right: 4px; flex: none; }

.tab.off { background: #dfdddb; }
.tab.bc { width: 120px; padding: 0 6px 0 3px; border-radius: 3px 0 0 0; }
.tab.white { background: #fff; width: 83px; margin-bottom: -1px; height: 27px; padding: 0 6px 1px 4px; }
.tab .ed { width: 13px; height: 13px; margin-right: 6px; }
.map { display: block; flex: none; background: #fff; margin-top: 0; width: 1014px; }
.land path { fill: #8ccdb7; stroke: #5cb498; stroke-width: 1.400; }
.land .sea { fill: #fff; stroke: #5cb498; }
.borders path, .borders ellipse { fill: none; stroke: #2f9f7e; stroke-width: 1.900; stroke-linejoin: round; }
.borders .detail path { stroke: #159371; stroke-width: 3; stroke-dasharray: 5 4; }
.mapstatus { height: 33px; flex: none; display: flex; align-items: center; padding: 0 4px 2px 1px; border-top: 1px solid #a5a3a1; }
.vgroove { width: 2px; height: 28px; background: #fff; border-left: 1px solid #b1afad; margin: 0 2px; flex: none; }
.scale { width: 87px; height: 28px; background: #fff; border-top: 2px solid #111; border-left: 2px solid #111; display: flex; align-items: center; padding: 1px 0 0 2px; white-space: nowrap; overflow: hidden; color: #222; }
.crs { width: 134px; height: 28px; margin: 0 3px; display: flex; align-items: center; justify-content: center; padding-top: 4px; border-right: 2px solid #111; border-bottom: 2px solid #111; border-top: 1px solid #fff; border-left: 1px solid #fff; }
.coords { width: 157px; height: 28px; background: #fff; border-top: 2px solid #111; border-left: 2px solid #111; display: flex; align-items: center; justify-content: center; padding-top: 1px; }

.tab.kat { width: 90px; padding-left: 2px; }
.tab.kat .ic, .tab.web .ic, .tab.bil .ic, .tab.act .ic { margin-right: 4px; }
.tab.web { width: 121px; padding-left: 4px; }
.tab.bil { width: 64px; padding-left: 3px; }
.tab.act { width: 144px; padding: 0 4px 0 3px; background: linear-gradient(#cfe0f3, #8cb8e6); border-radius: 4px 0 0 0; }
.tab.esp { width: 159px; border-left: 0; padding-left: 5px; }
.tab.esp .ic { margin-right: 5px; }
.act1 { margin-right: 11px; }
.act2 { margin-right: 11px; }
.act3 { margin-right: 9px; margin-top: 3px; }
.tablewrap { flex: 1; min-height: 0; display: flex; flex-direction: column; border: 2px solid #78ade2; border-left-width: 1px; border-bottom-width: 2px; margin-bottom: 0; }
.filter { height: 26px; flex: none; display: flex; align-items: center; padding-left: 5px; }
.combo { width: 291px; height: 25px; display: flex; align-items: center; padding: 1px 0 0 6px; border-right: 2px solid #111; border-bottom: 2px solid #111; border-top: 1px solid #fff; border-left: 1px solid #fff; margin-right: 3px; }
.combo span { flex: 1; padding-top: 1px; }
.cdiv { width: 2px; height: 16px; background: #fff; border-left: 1px solid #8f8d8b; }
.carrow { width: 11px; height: 6px; margin: 0 5px 0 3px; flex: none; }
.search { width: 655px; height: 24px; background: #fff; border-top: 2px solid #111; border-left: 2px solid #111; border-right: 1px solid #eee; border-bottom: 1px solid #eee; color: #9a9a9a; display: flex; align-items: center; padding-left: 2px; margin-right: 9px; }
.box { width: 13px; height: 13px; background: #fff; border: 1px solid #222; flex: none; margin-right: 5px; margin-top: 6px; }
.guz { width: 24px; overflow: hidden; margin-top: 7px; }
.sellabel { height: 20px; flex: none; padding: 0 0 0 5px; display: flex; align-items: center; }
.tablearea { height: 262px; flex: none; display: flex; }
.grid { width: 992px; flex: none; overflow: hidden; background: #fff; }
.hrow, .row { display: grid; grid-template-columns: 150px repeat(8, 100px) 100px; width: 1050px; }
.hrow { height: 27px; background: #dfdddb; border-bottom: 2px solid #111; }
.hrow span { display: flex; align-items: center; justify-content: center; padding-top: 1px; border-right: 2px solid #111; border-left: 1px solid #fff; border-top: 1px solid #fff; white-space: nowrap; overflow: hidden; margin-bottom: 0; }
.hrow .last { border-right: 0; justify-content: flex-start; padding-left: 14px; }
.row { height: 25px; background: #fff; }
.row:nth-child(odd) { background: #eeeeee; }
.row span { display: flex; align-items: center; justify-content: center; padding-top: 2px; white-space: nowrap; overflow: hidden; }
.row b { font-weight: normal; flex: none; }
.row .last { margin-left: 6px; width: 88px; }
.vscroll { width: 15px; margin-left: 3px; display: flex; flex-direction: column; flex: none; }
.strough { flex: 1; background: #b3b1ad; }
.sbtn { background: #dfdddb; display: flex; align-items: center; justify-content: center; flex: none; border-top: 1px solid #fff; border-left: 1px solid #fff; border-right: 1px solid #111; border-bottom: 1px solid #111; }
.sbtn svg { width: 9px; height: 6px; }
.sbtn.up { height: 15px; border-color: #fff #c8c6c4 #c8c6c4 #fff; }
.sbtn.dn { height: 14px; }
.vthumb { height: 20px; background: #dfdddb; flex: none; border-top: 1px solid #fff; border-left: 1px solid #fff; border-right: 1px solid #111; border-bottom: 1px solid #111; }
.hscroll { height: 14px; flex: none; display: flex; width: 992px; margin-top: 3px; }
.sbtn.hb { width: 14px; }
.sbtn.hb svg { width: 6px; height: 9px; }
.lft { border-right: 2px solid #111; }
.hthumb { width: 615px; background: #dfdddb; flex: none; border-top: 1px solid #fff; border-right: 1px solid #111; border-bottom: 1px solid #111; }

/* status bar */
.statusbar { height: 33px; flex: none; display: flex; align-items: center; }
.sbsep { width: 2px; height: 25px; background: #fff; border-left: 1px solid #a8a6a4; margin-left: 9px; flex: none; }
.sbicon { margin: 0 0 0 12px; }
.second { margin-left: 946px; }
```
